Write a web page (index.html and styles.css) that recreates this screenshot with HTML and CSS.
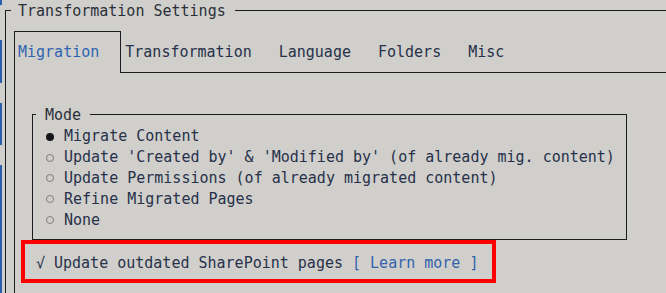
FILE: index.html
```html
<!DOCTYPE html>
<html lang="en">
<head>
    <meta charset="UTF-8">
    <title>Transformation Settings</title>
    <link rel="stylesheet" href="styles.css">
</head>
<body>
    <div class="edge"></div>
    <fieldset class="frame">
        <legend>Transformation Settings</legend>
        <div class="tabs">
            <div class="tab active">Migration</div>
            <div class="tab-rest">
                <span class="tab">Transformation</span>
                <span class="tab">Language</span>
                <span class="tab">Folders</span>
                <span class="tab">Misc</span>
            </div>
        </div>
        <div class="panel">
            <fieldset class="mode">
                <legend>Mode</legend>
                <div class="option"><span class="dot on"></span>Migrate Content</div>
                <div class="option"><span class="dot"></span>Update 'Created by' &amp; 'Modified by' (of already mig. content)</div>
                <div class="option"><span class="dot"></span>Update Permissions (of already migrated content)</div>
                <div class="option"><span class="dot"></span>Refine Migrated Pages</div>
                <div class="option"><span class="dot"></span>None</div>
            </fieldset>
            <div class="check"><span class="tick">√</span>Update outdated SharePoint pages <span class="link">[ Learn more ]</span></div>
        </div>
    </fieldset>
    <div class="highlight"></div>
</body>
</html>
```

FILE: styles.css
```css
html, body {
    margin: 0;
    padding: 0;
    height: 293px;
    overflow: hidden;
}

body {
    position: relative;
    background: #d0cfcb;
    color: #27314a;
    font-family: "DejaVu Sans Mono", monospace;
    font-size: 15px;
    line-height: 20.8px;
}

/* bit of another window peeking in on the left */
.edge {
    position: absolute;
    left: 0;
    top: 0;
    width: 2px;
    height: 293px;
    background: linear-gradient(to bottom,
        #2a5fae 0, #2a5fae 5px, transparent 5px, transparent 40px,
        #2a5fae 40px, #2a5fae 83px, transparent 83px, transparent 103px,
        #2a5fae 103px, #2a5fae 145px, transparent 145px, transparent 165px,
        #2a5fae 165px, #2a5fae 293px);
}

fieldset {
    min-width: 0;
    margin: 0;
    padding: 0;
    border: 0;
}

legend {
    padding: 0 9px 0 7px;
    line-height: 20.8px;
    color: #2b2f3a;
}

.frame {
    margin-left: 5px;
    height: 400px;
    border-top: 1px solid #1b1b22;
    border-left: 1px solid #1b1b22;
}

.frame > legend {
    margin-left: 5px;
    padding-top: 1px;
}

.tabs {
    display: flex;
    margin: 9px 0 0 8px;
}

.tab {
    white-space: pre;
}

.tab.active {
    padding: 10px 21px 10px 3px;
    border: 1px solid #1b1b22;
    border-bottom: 0;
    color: #2f64b0;
}

.tab-rest {
    flex: 1;
    display: flex;
    gap: 27px;
    padding: 11px 0 9px 4px;
    border-bottom: 1px solid #1b1b22;
}

.panel {
    margin-left: 8px;
    padding-top: 32px;
    height: 300px;
    border-left: 1px solid #1b1b22;
}

.mode {
    width: 595px;
    margin-left: 17px;
    padding: 1px 0 9px 12px;
    box-sizing: border-box;
    border: 1px solid #1b1b22;
}

.mode > legend {
    margin-left: -9px;
    padding: 0 9px;
}

.option {
    display: flex;
    align-items: center;
    white-space: pre;
}

.dot {
    width: 8px;
    height: 8px;
    margin: 0 10px 0 1px;
    border-radius: 50%;
    box-sizing: border-box;
    border: 1px solid #807f7d;
}

.dot.on {
    border: 0;
    background: #15151c;
}

.check {
    margin: 13px 0 0 21px;
    white-space: pre;
}

.tick {
    display: inline-block;
    width: 18px;
}

.link {
    color: #3463ab;
}

.highlight {
    position: absolute;
    left: 21px;
    top: 240px;
    width: 475px;
    height: 43px;
    box-sizing: border-box;
    border: 4px solid #ff0000;
}
```
